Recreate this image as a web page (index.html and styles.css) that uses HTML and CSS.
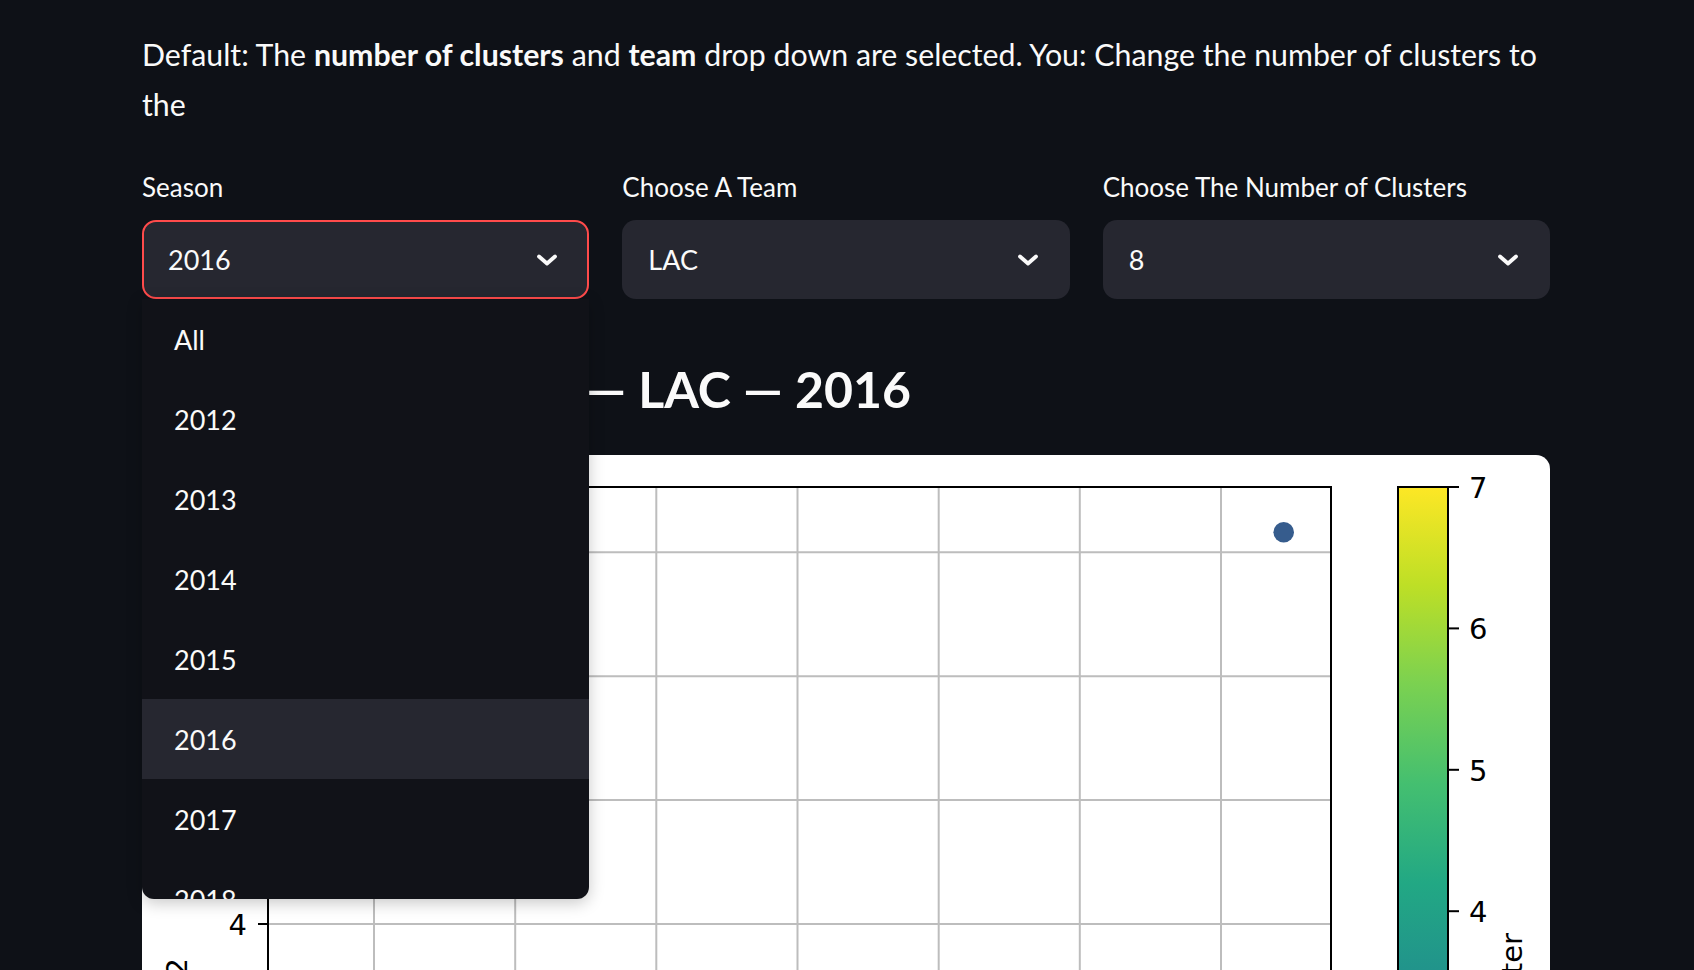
FILE: index.html
```html
<!DOCTYPE html>
<html lang="en">
<head>
<meta charset="utf-8">
<title>Team Clusters</title>
<link rel="stylesheet" href="styles.css">
</head>
<body>
<main class="main">
  <p class="intro">Default: The <strong>number of clusters</strong> and <strong>team</strong> drop down are selected. You: Change the number of clusters to the</p>

  <div class="filters">
    <div class="field">
      <label class="field-label">Season</label>
      <div class="select select--open">
        <span class="select-value">2016</span>
        <svg class="chevron" viewBox="0 0 24 14" aria-hidden="true"><path d="M4 3.5 L12 10.5 L20 3.5"/></svg>
      </div>
      <ul class="menu">
        <li class="menu-item">All</li>
        <li class="menu-item">2012</li>
        <li class="menu-item">2013</li>
        <li class="menu-item">2014</li>
        <li class="menu-item">2015</li>
        <li class="menu-item menu-item--active">2016</li>
        <li class="menu-item">2017</li>
        <li class="menu-item">2018</li>
        <li class="menu-item">2019</li>
      </ul>
    </div>
    <div class="field">
      <label class="field-label">Choose A Team</label>
      <div class="select">
        <span class="select-value">LAC</span>
        <svg class="chevron" viewBox="0 0 24 14" aria-hidden="true"><path d="M4 3.5 L12 10.5 L20 3.5"/></svg>
      </div>
    </div>
    <div class="field">
      <label class="field-label">Choose The Number of Clusters</label>
      <div class="select">
        <span class="select-value">8</span>
        <svg class="chevron" viewBox="0 0 24 14" aria-hidden="true"><path d="M4 3.5 L12 10.5 L20 3.5"/></svg>
      </div>
    </div>
  </div>

  <h3 class="title">Player Stat Clusters — LAC — 2016</h3>

  <div class="chart-card">
    <svg class="chart" width="1408" height="600" viewBox="0 0 1408 600">
      <defs>
        <linearGradient id="viridis" x1="0" y1="0" x2="0" y2="1">
          <stop offset="0" stop-color="#fde725"/>
          <stop offset="0.1" stop-color="#bddf26"/>
          <stop offset="0.2" stop-color="#7ad151"/>
          <stop offset="0.3" stop-color="#44bf70"/>
          <stop offset="0.4" stop-color="#22a884"/>
          <stop offset="0.5" stop-color="#21918c"/>
          <stop offset="0.6" stop-color="#2a788e"/>
          <stop offset="0.7" stop-color="#355f8d"/>
          <stop offset="0.8" stop-color="#414487"/>
          <stop offset="0.9" stop-color="#482475"/>
          <stop offset="1" stop-color="#440154"/>
        </linearGradient>
      </defs>
      <g class="grid">
        <line x1="232" y1="32" x2="232" y2="600"/>
        <line x1="373.2" y1="32" x2="373.2" y2="600"/>
        <line x1="514.3" y1="32" x2="514.3" y2="600"/>
        <line x1="655.5" y1="32" x2="655.5" y2="600"/>
        <line x1="796.7" y1="32" x2="796.7" y2="600"/>
        <line x1="937.8" y1="32" x2="937.8" y2="600"/>
        <line x1="1079" y1="32" x2="1079" y2="600"/>
        <line x1="126" y1="97.3" x2="1189" y2="97.3"/>
        <line x1="126" y1="221.2" x2="1189" y2="221.2"/>
        <line x1="126" y1="345.1" x2="1189" y2="345.1"/>
        <line x1="126" y1="469" x2="1189" y2="469"/>
        <line x1="126" y1="592.9" x2="1189" y2="592.9"/>
      </g>
      <circle cx="1141.7" cy="77.3" r="10.3" fill="#365c8d"/>
      <g class="spines">
        <line x1="126" y1="32" x2="126" y2="600"/>
        <line x1="1189" y1="32" x2="1189" y2="600"/>
        <line x1="125" y1="32" x2="1190" y2="32"/>
        <line x1="116" y1="97.3" x2="126" y2="97.3"/>
        <line x1="116" y1="221.2" x2="126" y2="221.2"/>
        <line x1="116" y1="345.1" x2="126" y2="345.1"/>
        <line x1="116" y1="469" x2="126" y2="469"/>
      </g>
      <g class="ticklabels">
        <text x="105" y="107.8" text-anchor="end">7</text>
        <text x="105" y="231.7" text-anchor="end">6</text>
        <text x="105" y="355.6" text-anchor="end">5</text>
        <text x="105" y="479.5" text-anchor="end">4</text>
        <text transform="translate(45,503) rotate(-90)" text-anchor="end">PC2</text>
      </g>
      <rect x="1256" y="32" width="50" height="990" fill="url(#viridis)" stroke="#000" stroke-width="2"/>
      <g class="spines">
        <line x1="1306" y1="32" x2="1317" y2="32"/>
        <line x1="1306" y1="173.4" x2="1317" y2="173.4"/>
        <line x1="1306" y1="314.8" x2="1317" y2="314.8"/>
        <line x1="1306" y1="456.2" x2="1317" y2="456.2"/>
      </g>
      <g class="ticklabels">
        <text x="1327" y="43">7</text>
        <text x="1327" y="184.4">6</text>
        <text x="1327" y="325.8">5</text>
        <text x="1327" y="467.2">4</text>
        <text transform="translate(1380,478) rotate(-90)" text-anchor="end">Cluster</text>
      </g>
    </svg>
  </div>
</main>
</body>
</html>
```

FILE: styles.css
```css
html,
body {
  margin: 0;
  background: #0e1117;
}

body {
  font-family: "Lato", "Liberation Sans", sans-serif;
  color: #fafafa;
}

.main {
  width: 1408px;
  margin-left: 142px;
  padding-top: 29px;
}

.intro {
  margin: 0;
  font-size: 30.3px;
  line-height: 50px;
}

.intro strong {
  font-weight: 700;
}

.filters {
  display: grid;
  grid-template-columns: repeat(3, 1fr);
  column-gap: 33px;
  margin-top: 41px;
}

.field {
  position: relative;
}

.field-label {
  display: block;
  font-size: 26px;
  line-height: 34px;
  margin-bottom: 16px;
}

.select {
  box-sizing: border-box;
  height: 79px;
  background: #262730;
  border: 2px solid transparent;
  border-radius: 14px;
  display: flex;
  align-items: center;
  justify-content: space-between;
  padding: 0 28px 0 24px;
  font-size: 27px;
}

.select--open {
  border-color: #ff4b4b;
}

.chevron {
  width: 24px;
  height: 14px;
  fill: none;
  stroke: #fafafa;
  stroke-width: 3.8;
  stroke-linecap: round;
  stroke-linejoin: round;
}

.menu {
  position: absolute;
  top: 100%;
  left: 0;
  right: 0;
  height: 600px;
  margin: 0;
  padding: 0;
  list-style: none;
  overflow: hidden;
  background: #111218;
  border-radius: 0 0 12px 12px;
  box-shadow: 0 4px 16px rgba(0, 0, 0, 0.22);
  z-index: 10;
}

.menu-item {
  height: 80px;
  display: flex;
  align-items: center;
  padding-left: 32px;
  font-size: 27px;
}

.menu-item--active {
  background: #262730;
}

.title {
  margin: 55px 0 31px;
  font-size: 50px;
  line-height: 70px;
  font-weight: 700;
}

.chart-card {
  background: #ffffff;
  border-radius: 14px;
  overflow: hidden;
  height: 600px;
}

.chart {
  display: block;
}

.grid line {
  stroke: #bdbdbd;
  stroke-width: 2;
}

.spines line {
  stroke: #000000;
  stroke-width: 2;
}

.ticklabels text {
  font-family: "DejaVu Sans", sans-serif;
  font-size: 29px;
  fill: #000000;
}
```
